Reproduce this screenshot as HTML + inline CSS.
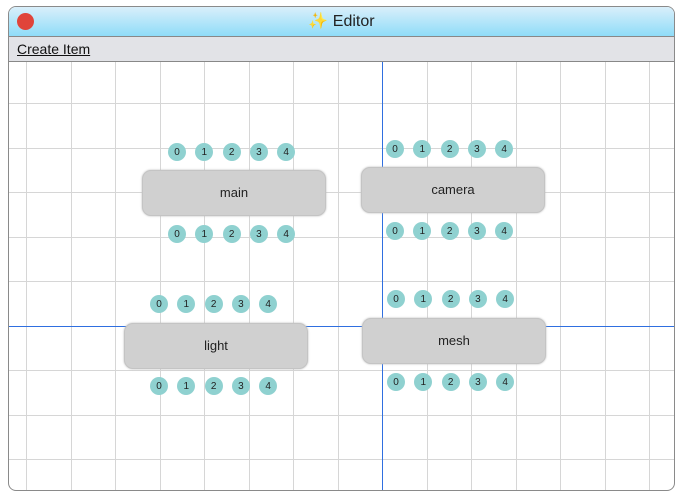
<!DOCTYPE html>
<html><head><style>
body{margin:0;width:685px;height:502px;background:#fff;font-family:"Liberation Sans",sans-serif;position:relative;overflow:hidden}
.win{position:absolute;left:8px;top:6px;width:665px;height:483px;border:1px solid #8a8a8a;border-radius:8px;overflow:hidden;background:#fff}
.title{position:absolute;left:0;top:0;width:100%;height:29px;background:linear-gradient(#d9effa,#8fdcf8);border-bottom:1px solid #888;text-align:center;line-height:29px;font-size:16px;color:#222}
.dot{position:absolute;left:8px;top:6px;width:17px;height:17px;border-radius:50%;background:#e0443a}
.menu{position:absolute;left:0;top:30px;width:100%;height:24px;background:#e2e3e7;border-bottom:1px solid #888;font-size:14px;line-height:25px}
.menu span{margin-left:8px;text-decoration:underline;color:#111}
.canvas{position:absolute;left:0;top:55px;width:100%;height:430px}
.node{position:absolute;width:182px;height:44px;background:#d0d0d0;border:1px solid #c4c4c4;border-radius:9px;box-shadow:0 0 2px #bbb;text-align:center;line-height:44px;font-size:13px;color:#222}
.p{position:absolute;width:18px;height:18px;border-radius:50%;background:#8fd1d0;font-size:10px;line-height:20px;text-align:center;color:#222}
.bl{position:absolute;background:#2f6fe0}
</style></head><body>
<div class="win">
<div class="title"><div class="dot"></div>✨ Editor</div>
<div class="menu"><span>Create Item</span></div>
<div class="canvas">
<svg width="665" height="430" style="position:absolute;left:0;top:0">
<g stroke="#d6d6d6" stroke-width="1">
<line x1="17.5" y1="0" x2="17.5" y2="430"/><line x1="62.5" y1="0" x2="62.5" y2="430"/><line x1="106.5" y1="0" x2="106.5" y2="430"/><line x1="151.5" y1="0" x2="151.5" y2="430"/><line x1="195.5" y1="0" x2="195.5" y2="430"/><line x1="240.5" y1="0" x2="240.5" y2="430"/><line x1="284.5" y1="0" x2="284.5" y2="430"/><line x1="329.5" y1="0" x2="329.5" y2="430"/><line x1="418.5" y1="0" x2="418.5" y2="430"/><line x1="462.5" y1="0" x2="462.5" y2="430"/><line x1="507.5" y1="0" x2="507.5" y2="430"/><line x1="551.5" y1="0" x2="551.5" y2="430"/><line x1="596.5" y1="0" x2="596.5" y2="430"/><line x1="640.5" y1="0" x2="640.5" y2="430"/>
<line x1="0" y1="41.5" x2="665" y2="41.5"/><line x1="0" y1="86.5" x2="665" y2="86.5"/><line x1="0" y1="130.5" x2="665" y2="130.5"/><line x1="0" y1="175.5" x2="665" y2="175.5"/><line x1="0" y1="219.5" x2="665" y2="219.5"/><line x1="0" y1="308.5" x2="665" y2="308.5"/><line x1="0" y1="353.5" x2="665" y2="353.5"/><line x1="0" y1="397.5" x2="665" y2="397.5"/>
</g>
</svg>
<div class="bl" style="left:373px;top:0;width:1px;height:430px"></div>
<div class="bl" style="left:0;top:264px;width:665px;height:1px"></div>
</div>
</div>
<div class="node" style="left:142px;top:170px">main</div>
<div class="node" style="left:361px;top:167px">camera</div>
<div class="node" style="left:124px;top:323px">light</div>
<div class="node" style="left:362px;top:318px">mesh</div>
<div id="ports"></div>
<script>
var d=[[177,152],[177,234],[395,149],[395,231],[159,304],[159,386],[396,299],[396,382]],h='';
d.forEach(function(a){for(var i=0;i<5;i++){h+='<div class="p" style="left:'+(a[0]+i*27.3-9)+'px;top:'+(a[1]-9)+'px">'+i+'</div>';}});
document.getElementById('ports').innerHTML=h;
</script>
</body></html>
